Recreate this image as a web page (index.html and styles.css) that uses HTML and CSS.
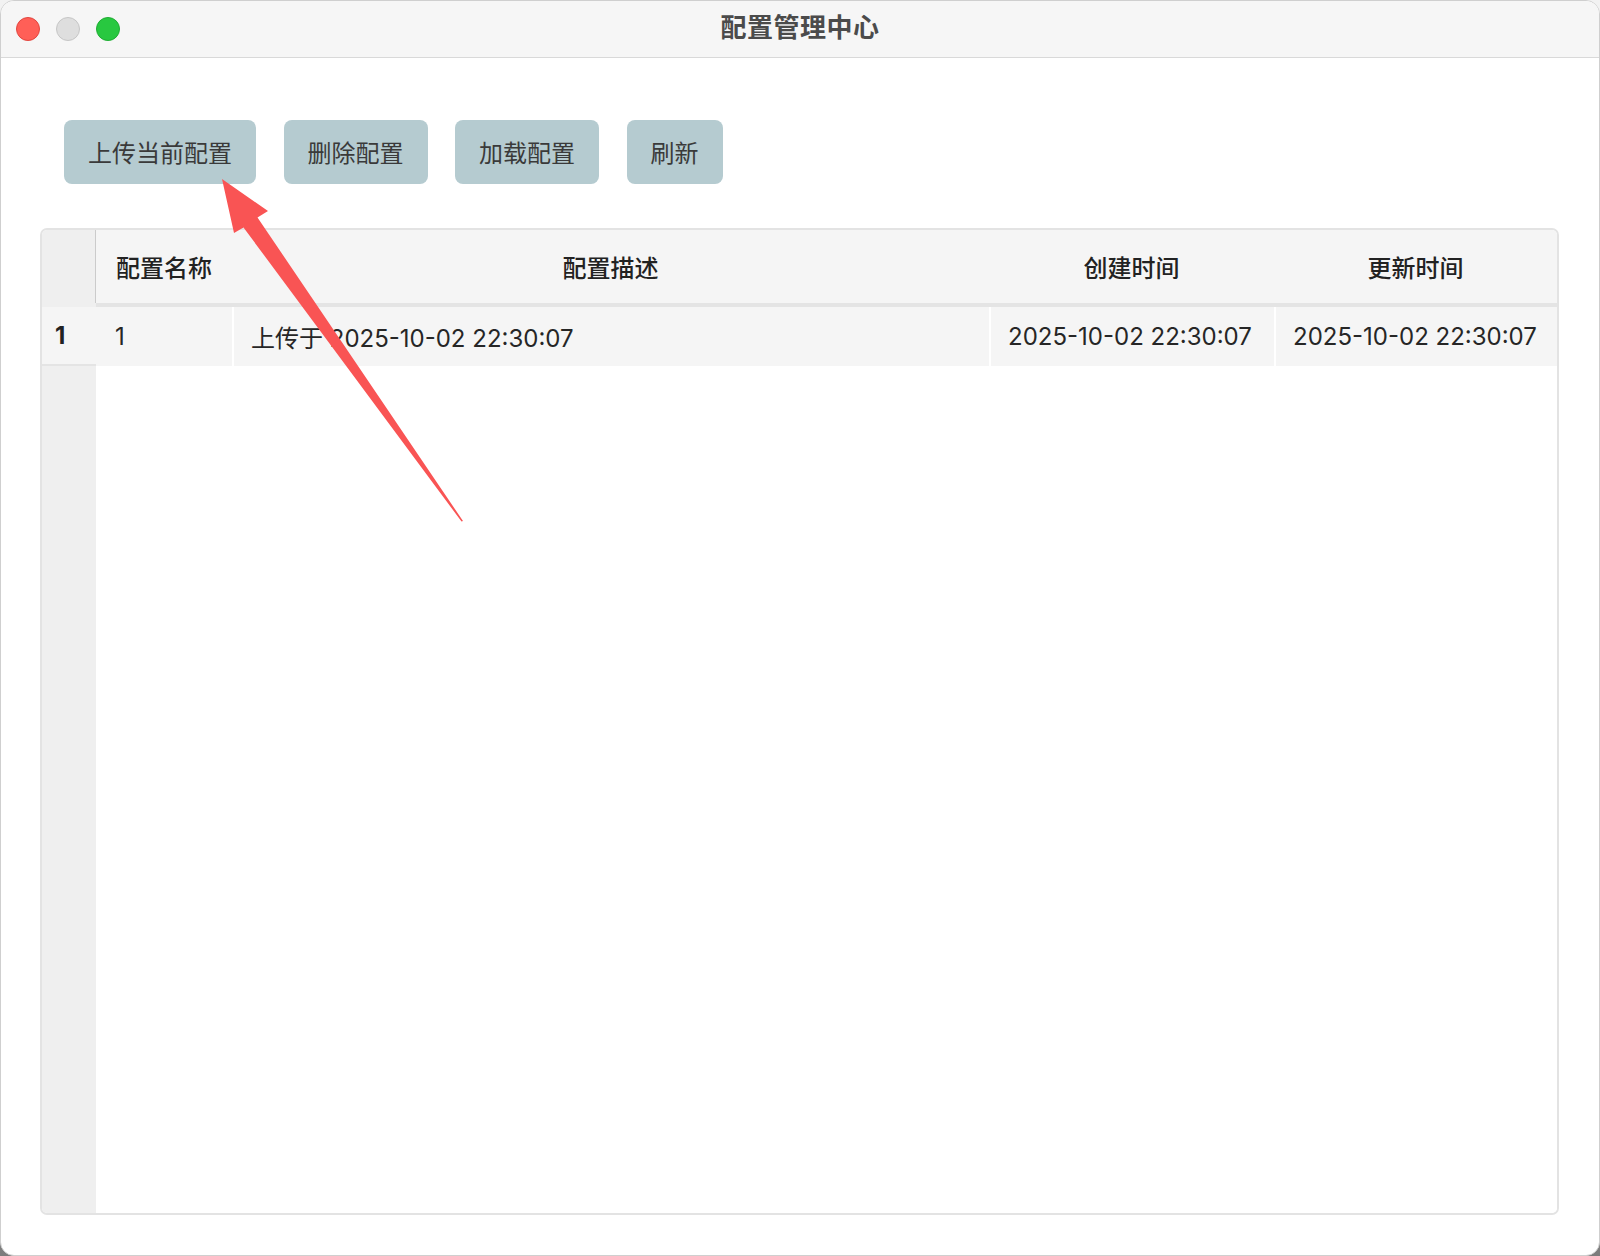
FILE: index.html
```html
<!DOCTYPE html>
<html lang="zh-CN">
<head>
<meta charset="utf-8">
<title>配置管理中心</title>
<link rel="stylesheet" href="styles.css">
</head>
<body>
<div class="window">
  <header class="titlebar">
    <div class="lights">
      <span class="light light-close"></span>
      <span class="light light-min"></span>
      <span class="light light-max"></span>
    </div>
    <div class="title">配置管理中心</div>
    <div class="spacer"></div>
  </header>
  <main class="content">
    <div class="toolbar">
      <button class="btn">上传当前配置</button>
      <button class="btn">删除配置</button>
      <button class="btn">加载配置</button>
      <button class="btn">刷新</button>
    </div>
    <div class="table">
      <div class="grid">
        <div class="corner"></div>
        <div class="th">配置名称</div>
        <div class="th">配置描述</div>
        <div class="th">创建时间</div>
        <div class="th">更新时间</div>
        <div class="corner-band"></div>
        <div class="head-band"></div>
        <div class="rh">1</div>
        <div class="td">1</div>
        <div class="td sep">上传于 2025-10-02 22:30:07</div>
        <div class="td sep">2025-10-02 22:30:07</div>
        <div class="td sep">2025-10-02 22:30:07</div>
        <div class="rh-fill"></div>
        <div class="body-fill"></div>
      </div>
    </div>
  </main>
  <svg class="arrow" width="1600" height="1256" viewBox="0 0 1600 1256" aria-hidden="true">
    <polygon points="222,179 268,211 257.5,217.5 463,521 461.5,521.5 243.5,227.5 234,233" fill="#f95454"/>
  </svg>
</div>
</body>
</html>
```

FILE: styles.css
```css
html, body {
  margin: 0;
  padding: 0;
}
body {
  width: 1600px;
  height: 1256px;
  background: linear-gradient(to bottom, #f2f2f2 0%, #f2f2f2 60%, #7c7c7c 100%);
  font-family: Inter, "Noto Sans CJK SC", sans-serif;
  overflow: hidden;
}
.window {
  position: relative;
  width: 1600px;
  height: 1256px;
  box-sizing: border-box;
  background: #ffffff;
  border-radius: 14px;
  border: 1px solid #cfcfcf;
  overflow: hidden;
  display: flex;
  flex-direction: column;
}
.titlebar {
  height: 56px;
  flex: none;
  background: #f6f6f6;
  border-bottom: 1px solid #d9d9d9;
  display: grid;
  grid-template-columns: 1fr auto 1fr;
  align-items: center;
}
.lights {
  display: flex;
  gap: 16px;
  padding-left: 15px;
}
.light {
  width: 24px;
  height: 24px;
  border-radius: 50%;
  box-sizing: border-box;
}
.light-close { background: #ff5f57; border: 1px solid #e2463f; }
.light-min { background: #dedede; border: 1px solid #c6c6c6; }
.light-max { background: #28c840; border: 1px solid #1fad33; }
.title {
  font-family: "Noto Sans CJK SC", sans-serif;
  font-size: 26px;
  font-weight: 700;
  color: #4b4b4b;
  letter-spacing: 0.5px;
  line-height: 1;
  padding-bottom: 6px;
}
.content {
  flex: 1;
  display: flex;
  flex-direction: column;
  padding: 62px 40px 40px 39px;
  min-height: 0;
}
.toolbar {
  display: flex;
  gap: 27.5px;
  padding-left: 24px;
  height: 64px;
  flex: none;
}
.btn {
  height: 64px;
  padding: 0 24px;
  border: none;
  border-radius: 8px;
  background: #b5cbd0;
  color: #3a3a3a;
  font-family: "Noto Sans CJK SC", sans-serif;
  font-size: 24px;
  font-weight: 400;
  line-height: 1;
  cursor: pointer;
}
.table {
  margin-top: 44px;
  flex: 1;
  border: 2px solid #e3e3e3;
  border-radius: 7px;
  overflow: hidden;
  background: #ffffff;
  display: flex;
  min-height: 0;
}
.grid {
  flex: 1;
  display: grid;
  grid-template-columns: 54px 136px 757px 285px 1fr;
  grid-template-rows: 73px 4px 59px 1fr;
}
.corner {
  background: #efefef;
  border-right: 1px solid #cbcbcb;
}
.th {
  background: #f5f5f5;
  display: flex;
  align-items: center;
  justify-content: center;
  font-family: "Noto Sans CJK SC", sans-serif;
  font-size: 24px;
  font-weight: 500;
  color: #222222;
}
.corner-band {
  background: #efefef;
}
.head-band {
  grid-column: 2 / 6;
  background: #e4e4e4;
}
.rh {
  background: #f5f5f5;
  border-bottom: 3px solid #e4e4e4;
  margin-bottom: -1px;
  display: flex;
  align-items: center;
  padding-left: 13px;
  font-size: 24px;
  font-weight: 700;
  color: #222222;
}
.td {
  background: #f5f5f5;
  display: flex;
  align-items: center;
  padding-left: 19px;
  padding-bottom: 1px;
  font-size: 24px;
  color: #262626;
  white-space: nowrap;
}
.td.sep {
  border-left: 2px solid #ffffff;
  padding-left: 17px;
}
.rh-fill {
  background: #efefef;
}
.body-fill {
  grid-column: 2 / 6;
  background: #ffffff;
}
.arrow {
  position: absolute;
  left: -1px;
  top: -1px;
  pointer-events: none;
}
```
